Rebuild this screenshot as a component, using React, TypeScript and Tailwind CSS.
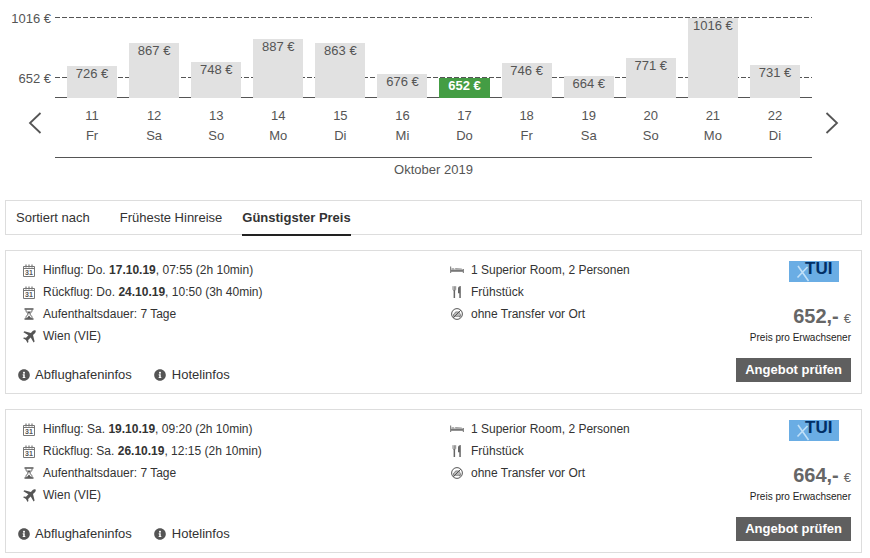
import React, { useState } from 'react';
import { FaInfoCircle } from 'react-icons/fa';

const days = [
  { day: 11, weekday: 'Fr', price: 726 },
  { day: 12, weekday: 'Sa', price: 867 },
  { day: 13, weekday: 'So', price: 748 },
  { day: 14, weekday: 'Mo', price: 887 },
  { day: 15, weekday: 'Di', price: 863 },
  { day: 16, weekday: 'Mi', price: 676 },
  { day: 17, weekday: 'Do', price: 652 },
  { day: 18, weekday: 'Fr', price: 746 },
  { day: 19, weekday: 'Sa', price: 664 },
  { day: 20, weekday: 'So', price: 771 },
  { day: 21, weekday: 'Mo', price: 1016 },
  { day: 22, weekday: 'Di', price: 731 },
];

const offers = [
  { id: 1, outDay: 'Do.', outDate: '17.10.19', outTime: '07:55 (2h 10min)', backDay: 'Do.', backDate: '24.10.19', backTime: '10:50 (3h 40min)', price: 652 },
  { id: 2, outDay: 'Sa.', outDate: '19.10.19', outTime: '09:20 (2h 10min)', backDay: 'Sa.', backDate: '26.10.19', backTime: '12:15 (2h 10min)', price: 664 },
];

type Offer = (typeof offers)[number];

const minPrice = Math.min(...days.map(d => d.price));
const maxPrice = Math.max(...days.map(d => d.price));

// cheapest day is 20px high, the most expensive one 80px
const barHeight = (price: number) => Math.round(20 + ((price - minPrice) / (maxPrice - minPrice)) * 60);

const CalendarIcon = () => (
  <svg width="12" height="13" viewBox="0 0 12 13" fill="none" stroke="#777" aria-hidden="true">
    <path d="M.5 2.5h11v10H.5z" />
    <path d="M.5 4.5h11" />
    <path d="M3 .5v3M6 .5v3M9 .5v3" strokeWidth="1.2" />
    <text x="6" y="11.3" fontSize="7" fontWeight="bold" textAnchor="middle" fill="#555" stroke="none">31</text>
  </svg>
);

const HourglassIcon = () => (
  <svg width="10" height="12" viewBox="0 0 10 12" aria-hidden="true">
    <path d="M.5 1h9M.5 11h9" stroke="#555" strokeWidth="1.6" />
    <path d="M2 1.5v1.7L4.2 6 2 8.8v1.7h6V8.8L5.8 6 8 3.2V1.5" fill="none" stroke="#666" />
    <path d="M3 3.5h4L5 6zM2.5 10.5L5 7.5l2.5 3z" fill="#555" />
  </svg>
);

const PlaneIcon = () => (
  <svg width="13" height="13" viewBox="0 0 13 13" aria-hidden="true">
    <path d="M12.5.5c-.7-.6-2-.2-2.8.6L7.900 2.900 1.400 1.300.4 2.300 5.400 5.200 3 7.700.9 7.500.1 8.300l2.800 1.700 1.700 2.900.8-.8-.2-2.200 2.500-2.400 2.900 5.100 1-1L10 5.100l1.900-1.800c.8-.8 1.200-2.200.6-2.800z" fill="#555" />
  </svg>
);

const BedIcon = () => (
  <svg width="14" height="8" viewBox="0 0 14 8" aria-hidden="true">
    <path d="M.6.5v6.500M13.400 3v4" stroke="#888" strokeWidth="1.200" />
    <path d="M1 3.800h12v2H1z" fill="#777" />
    <path d="M1.500 3.800V2.200h2.600l.7 1.600zM5.200 3.800V2l6.300.5 1.700 1.300z" fill="#999" />
  </svg>
);

const CutleryIcon = () => (
  <svg width="10" height="12" viewBox="0 0 10 12" aria-hidden="true">
    <path d="M1 .2v3.200c0 .8.6 1.100 1.300 1.100s1.400-.3 1.400-1.100V.2M2.350.2V5" fill="none" stroke="#666" strokeWidth=".8" />
    <path d="M2.350 4.500V12" stroke="#666" strokeWidth="1.500" />
    <path d="M8.800 0v12H7.300V7.200H6V2.500C6 1 7.200 0 8.800 0z" fill="#666" />
  </svg>
);

const NoTransferIcon = () => (
  <svg width="12" height="12" viewBox="0 0 12 12" fill="none" stroke="#555" aria-hidden="true">
    <circle cx="6" cy="6" r="5.400" />
    <path d="M2.500 6.300l.9-.5 1.200-1.900h3.200l1.300 2 .5.500v1.900H2.500z" fill="#bbb" stroke="#666" strokeWidth=".7" />
    <path d="M3.300 8.300v1M8.700 8.300v1" stroke="#666" />
    <path d="M2.200 9.800L9.800 2.200" />
  </svg>
);

const TuiLogo = () => (
  <svg width="50" height="21" viewBox="0 0 50 21" className="overflow-visible" role="img" aria-label="XTUI">
    <path d="M0 0h50v21H0z" fill="#6aade4" />
    <path d="M9 5l10.500 15M18.500 6L8.500 16.500" stroke="#c0e0f8" strokeWidth="1.600" />
    <text x="16" y="13" fontSize="17" fontWeight="bold" fill="#002f66">TUI</text>
  </svg>
);

const Row = ({ icon, children }: { icon: React.ReactNode; children: React.ReactNode }) => (
  <li className="flex h-[22px] items-center gap-[7px]">
    <span className="flex w-[14px] shrink-0 justify-center">{icon}</span>
    <span>{children}</span>
  </li>
);

const PriceChart: React.FC = () => {
  const [selected, setSelected] = useState(17);

  return (
    <section className="flex pt-[17px] text-[13px] text-[#555]">
      <div className="flex w-[55px] shrink-0 flex-col items-end pr-1">
        <span className="-mt-2 h-[60px] leading-[19px]">{maxPrice} €</span>
        <span className="leading-[19px]">{minPrice} €</span>
        <button type="button" aria-label="Zurück" className="mt-[23px] mr-2">
          <svg width="16" height="24" viewBox="0 0 16 24" fill="none" stroke="#555" strokeWidth="1.8">
            <path d="M13.5 2L3 12l10.5 10" />
          </svg>
        </button>
      </div>

      <div className="min-w-0 flex-1">
        <div className="relative border-b border-[#555]">
          <div className="absolute inset-x-0 top-0 h-px bg-[repeating-linear-gradient(90deg,#555_0_5px,transparent_5px_7px)]" />
          <div className="absolute inset-x-0 top-[60px] h-px bg-[repeating-linear-gradient(90deg,#555_0_5px,transparent_5px_7px)]" />
          <div className="relative -mb-px grid h-[81px] grid-cols-12 items-end px-[6px]">
            {days.map(d => (
              <button
                key={d.day}
                type="button"
                onClick={() => setSelected(d.day)}
                className={`mx-[6px] flex justify-center leading-[15px] ${d.day === selected ? 'bg-[#449d44] font-bold text-white' : 'bg-[#e1e1e1]'}`}
                style={{ height: barHeight(d.price) }}
              >
                {d.price} €
              </button>
            ))}
          </div>
        </div>
        <div className="grid grid-cols-12 border-b border-[#555] px-[6px] pt-2 pb-[11px] text-center leading-5">
          {days.map(d => (
            <div key={d.day}>
              <p>{d.day}</p>
              <p>{d.weekday}</p>
            </div>
          ))}
        </div>
        <p className="pt-0.5 text-center leading-5">Oktober 2019</p>
      </div>

      <div className="w-[58px] shrink-0 pt-[94px] pl-3">
        <button type="button" aria-label="Weiter">
          <svg width="16" height="24" viewBox="0 0 16 24" fill="none" stroke="#555" strokeWidth="1.8">
            <path d="M2.5 2L13 12 2.5 22" />
          </svg>
        </button>
      </div>
    </section>
  );
};

const OfferCard: React.FC<{ offer: Offer }> = ({ offer }) => (
  <article className="flex border border-[#ddd] pt-2 pr-[10px] pb-[11px] text-[12px] text-[#333]">
    <div className="flex flex-1 flex-col justify-between">
      <div className="grid grid-cols-[428px_1fr] pl-4">
        <ul>
          <Row icon={<CalendarIcon />}>Hinflug: {offer.outDay} <b>{offer.outDate}</b>, {offer.outTime}</Row>
          <Row icon={<CalendarIcon />}>Rückflug: {offer.backDay} <b>{offer.backDate}</b>, {offer.backTime}</Row>
          <Row icon={<HourglassIcon />}>Aufenthaltsdauer: 7 Tage</Row>
          <Row icon={<PlaneIcon />}>Wien (VIE)</Row>
        </ul>
        <ul>
          <Row icon={<BedIcon />}>1 Superior Room, 2 Personen</Row>
          <Row icon={<CutleryIcon />}>Frühstück</Row>
          <Row icon={<NoTransferIcon />}>ohne Transfer vor Ort</Row>
        </ul>
      </div>
      <div className="flex gap-[22px] pl-3 text-[13px] leading-[14px]">
        <a href="#flughafen" className="flex items-center gap-[5px]">
          <FaInfoCircle className="size-3 text-[#555]" />
          Abflughafeninfos
        </a>
        <a href="#hotel" className="flex items-center gap-[6px]">
          <FaInfoCircle className="size-3 text-[#555]" />
          Hotelinfos
        </a>
      </div>
    </div>

    <div className="flex shrink-0 flex-col items-end pt-0.5">
      <div className="mr-3">
        <TuiLogo />
      </div>
      <p className="mt-[22px] flex items-baseline gap-[5px] leading-6 text-[#666]">
        <b className="text-[20px]">{offer.price},-</b>
        <span className="text-[13px]">€</span>
      </p>
      <p className="text-[10px] leading-[14px] text-[#222]">Preis pro Erwachsener</p>
      <button type="button" className="mt-[13px] h-6 bg-[#5f5f5f] px-[9px] text-[13px] leading-6 font-bold text-white">Angebot prüfen</button>
    </div>
  </article>
);

const sortOptions = ['Früheste Hinreise', 'Günstigster Preis'];

const App: React.FC = () => {
  const [sort, setSort] = useState('Günstigster Preis');

  return (
    <main className="bg-white font-['Liberation_Sans',Arial,sans-serif]">
      <PriceChart />

      <div className="mt-5 mr-2 ml-[5px] flex flex-col gap-[15px]">
        <nav className="flex h-[35px] border border-[#ddd] pl-[10px] text-[13px] leading-[33px] text-[#333]">
          <span className="mr-[30px]">Sortiert nach</span>
          {sortOptions.map(option => (
            <button
              key={option}
              type="button"
              onClick={() => setSort(option)}
              className={`mr-5 h-[35px] border-b-2 ${option === sort ? 'border-[#222] font-bold' : 'border-transparent'}`}
            >
              {option}
            </button>
          ))}
        </nav>

        {offers.map(offer => <OfferCard key={offer.id} offer={offer} />)}
      </div>
    </main>
  );
};

export default App;
